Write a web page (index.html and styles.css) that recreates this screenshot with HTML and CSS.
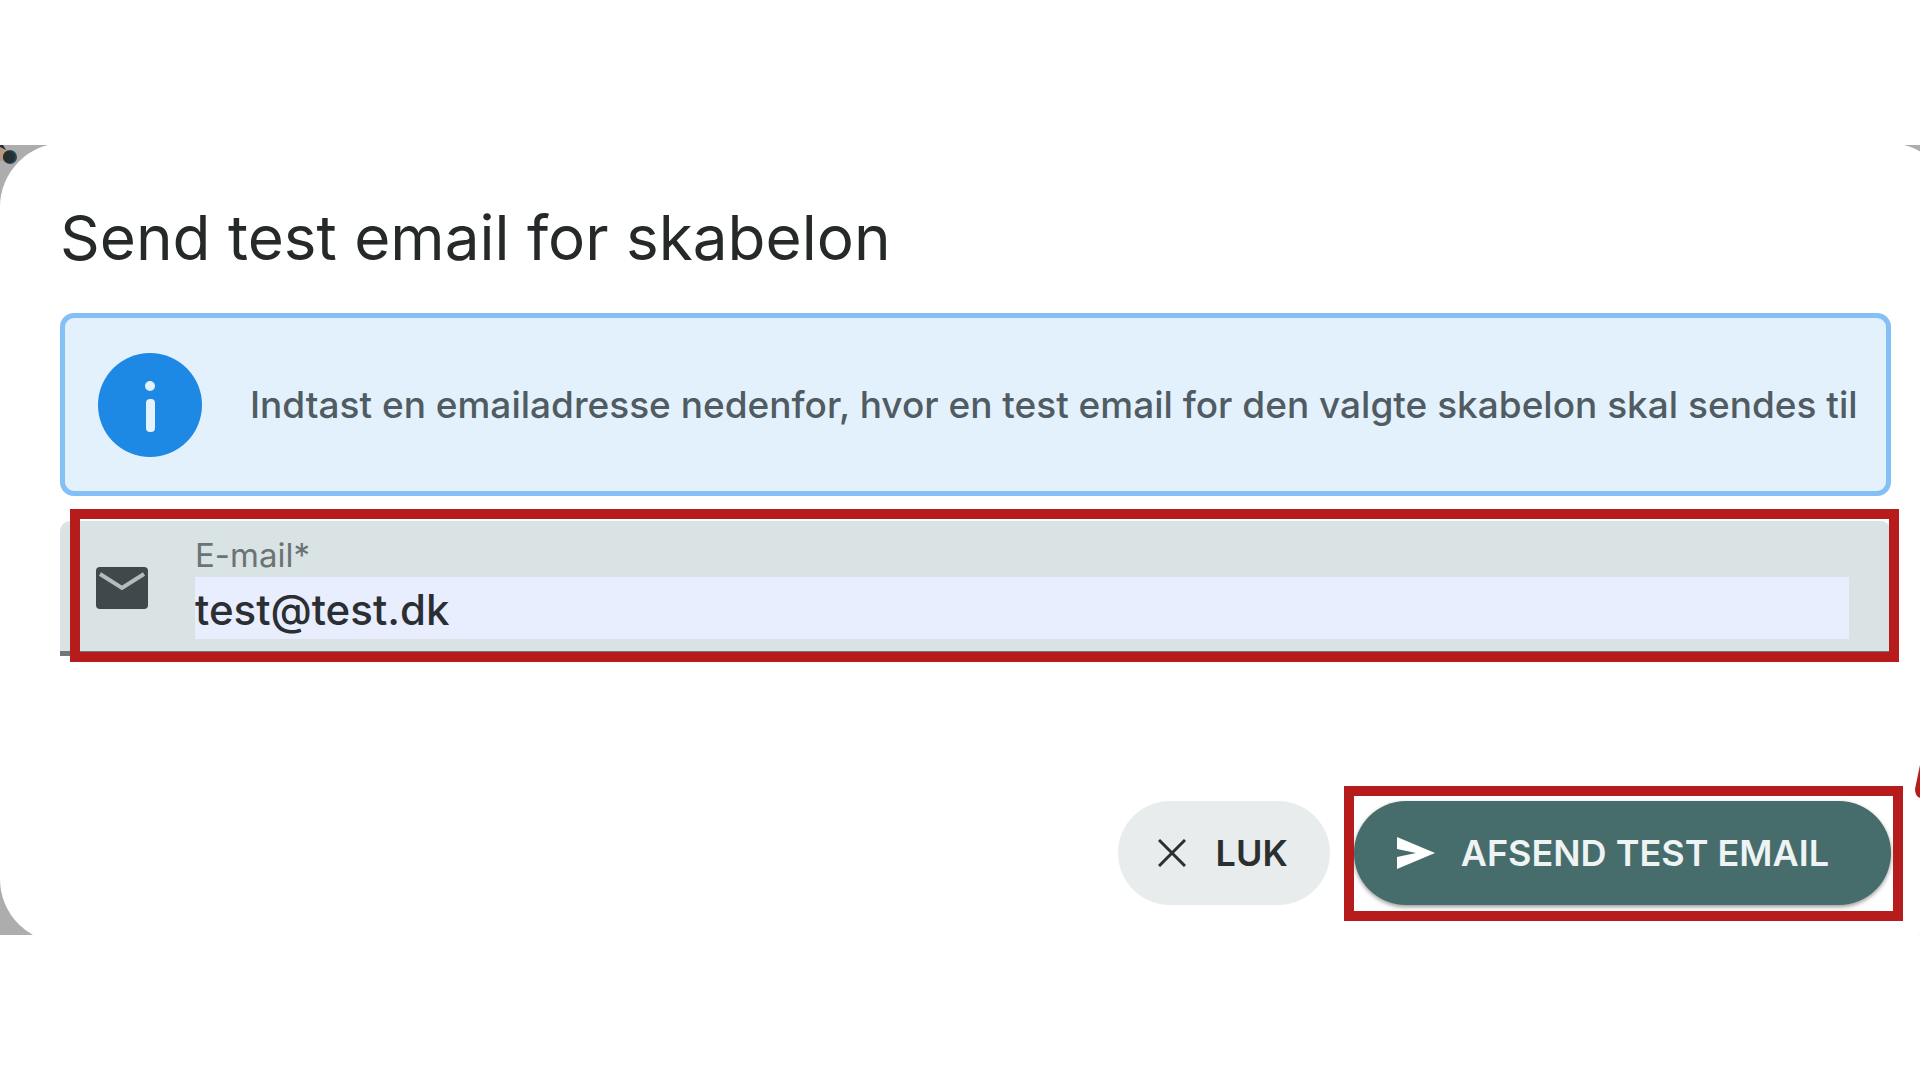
FILE: index.html
```html
<!DOCTYPE html>
<html lang="da">
<head>
<meta charset="utf-8">
<meta name="viewport" content="width=device-width, initial-scale=1">
<title>Send test email for skabelon</title>
<link rel="stylesheet" href="styles.css">
</head>
<body>
<main class="backdrop">
  <svg class="backdrop-detail" viewBox="0 0 20 24" aria-hidden="true">
    <circle cx="2" cy="9" r="7" fill="#b79a80"/>
    <path d="M0 0h3l3 5-6-3z" fill="#263238"/>
    <circle cx="10" cy="12" r="7" fill="#24495f"/>
    <circle cx="9" cy="12" r="6" fill="#263030"/>
  </svg>
  <form class="dialog" aria-labelledby="dialog-title">
    <h1 class="dialog-title" id="dialog-title">Send test email for skabelon</h1>
    <div class="alert">
      <svg class="alert-icon" viewBox="0 0 104 104" aria-hidden="true">
        <circle cx="52" cy="52" r="52" fill="#1e88e5"/>
        <circle cx="52" cy="33" r="5" fill="#e3f2fd"/>
        <rect x="48" y="46" width="9" height="33" rx="4" fill="#e3f2fd"/>
      </svg>
      <p class="alert-text">Indtast en emailadresse nedenfor, hvor en test email for den valgte skabelon skal sendes til</p>
    </div>
    <div class="marked marked-field">
      <div class="field">
        <svg class="field-icon" viewBox="0 0 52 42" aria-hidden="true">
          <rect width="52" height="42" rx="4" fill="#3f484a"/>
          <path d="M4 7l22 14L48 7" fill="none" stroke="#b4bdbd" stroke-width="4"/>
        </svg>
        <div class="field-body">
          <label class="field-label" for="email">E-mail*</label>
          <input class="field-input" id="email" type="email" value="test@test.dk" required>
        </div>
      </div>
    </div>
    <div class="actions">
      <button class="button button-close" type="button">
        <svg class="close-icon" viewBox="0 0 28 28" aria-hidden="true">
          <path d="M1 1l26 26M27 1L1 27" fill="none" stroke="#2b2f2f" stroke-width="3"/>
        </svg>
        <span>LUK</span>
      </button>
      <div class="marked marked-button">
        <button class="button button-send" type="submit">
          <svg class="send-icon" viewBox="0 0 38 32" aria-hidden="true">
            <path d="M0 0l38 16L0 32V20l19-4L0 12z" fill="#fff"/>
          </svg>
          <span>AFSEND TEST EMAIL</span>
        </button>
      </div>
    </div>
  </form>
  <svg class="arrow-tip" viewBox="0 0 5 34" aria-hidden="true">
    <path d="M5 0L0 24q0 7 5 9z" fill="#b71c1c"/>
  </svg>
</main>
</body>
</html>
```
FILE: styles.css
```css
* {
  box-sizing: border-box;
}

body {
  margin: 0;
  background: #fff;
  color: #252929;
  font-family: Inter, "Liberation Sans", sans-serif;
  font-optical-sizing: none;
}

.backdrop {
  position: relative;
  display: flow-root;
  margin-top: 145px;
  overflow: hidden;
  background: #adadad;
}

.backdrop-detail {
  position: absolute;
  top: 0;
  left: 0;
  width: 20px;
  height: 24px;
}

.dialog {
  position: relative;
  margin: -2px -32px -8px 0;
  padding: 55px 61px 38px 60px;
  border-radius: 64px;
  background: #fff;
}

.dialog-title {
  margin: 0 0 35px;
  font-size: 62px;
  font-weight: 400;
  line-height: 80px;
}

.alert {
  display: flex;
  align-items: center;
  gap: 48px;
  min-height: 183px;
  margin-bottom: 25px;
  padding: 0 20px 0 33px;
  border: 5px solid #84bff5;
  border-radius: 14px;
  background: #e3f1fd;
}

.alert-icon {
  flex: none;
  width: 104px;
  height: 104px;
}

.alert-text {
  margin: 0;
  color: #505b62;
  font-size: 37px;
  font-weight: 500;
  line-height: 52px;
}

.marked {
  position: relative;
}

.marked::after {
  content: "";
  position: absolute;
  border: 10px solid #b71c1c;
  pointer-events: none;
}

.marked-field::after {
  inset: -12px -8px -6px 10px;
}

.marked-button::after {
  inset: -15px -12px -16px -10px;
}

.field {
  display: flex;
  align-items: center;
  gap: 47px;
  padding: 12px 42px 12px 36px;
  border-bottom: 5px solid #6f7979;
  border-radius: 10px 10px 0 0;
  background: #dae3e4;
}

.field-icon {
  flex: none;
  width: 52px;
  height: 42px;
  margin-top: 4px;
}

.field-body {
  display: flex;
  flex: 1;
  flex-direction: column;
}

.field-label {
  color: #6a7476;
  font-size: 33px;
  line-height: 44px;
}

.field-input {
  width: 100%;
  height: 62px;
  padding: 2px 0 0;
  border: 0;
  background: #e8eefd;
  color: #2b2e32;
  font-family: inherit;
  font-size: 42px;
  font-weight: 500;
  line-height: 60px;
}

.actions {
  display: flex;
  justify-content: flex-end;
  gap: 24px;
  margin-top: 145px;
}

.button {
  display: flex;
  align-items: center;
  height: 104px;
  border: 0;
  border-radius: 52px;
  font-family: inherit;
  font-size: 36px;
  font-weight: 600;
  line-height: 52px;
}

.button-close {
  gap: 30px;
  padding: 0 42px 0 40px;
  background: #e8eced;
  color: #2b2f2f;
}

.button-send {
  gap: 26px;
  padding: 0 62px 0 43px;
  background: #476c6c;
  box-shadow: 0 2px 4px #00000066;
  color: #eef3f3;
}

.close-icon {
  width: 28px;
  height: 28px;
}

.send-icon {
  width: 38px;
  height: 32px;
}

.arrow-tip {
  position: absolute;
  top: 620px;
  right: 0;
  width: 5px;
  height: 34px;
}
```
